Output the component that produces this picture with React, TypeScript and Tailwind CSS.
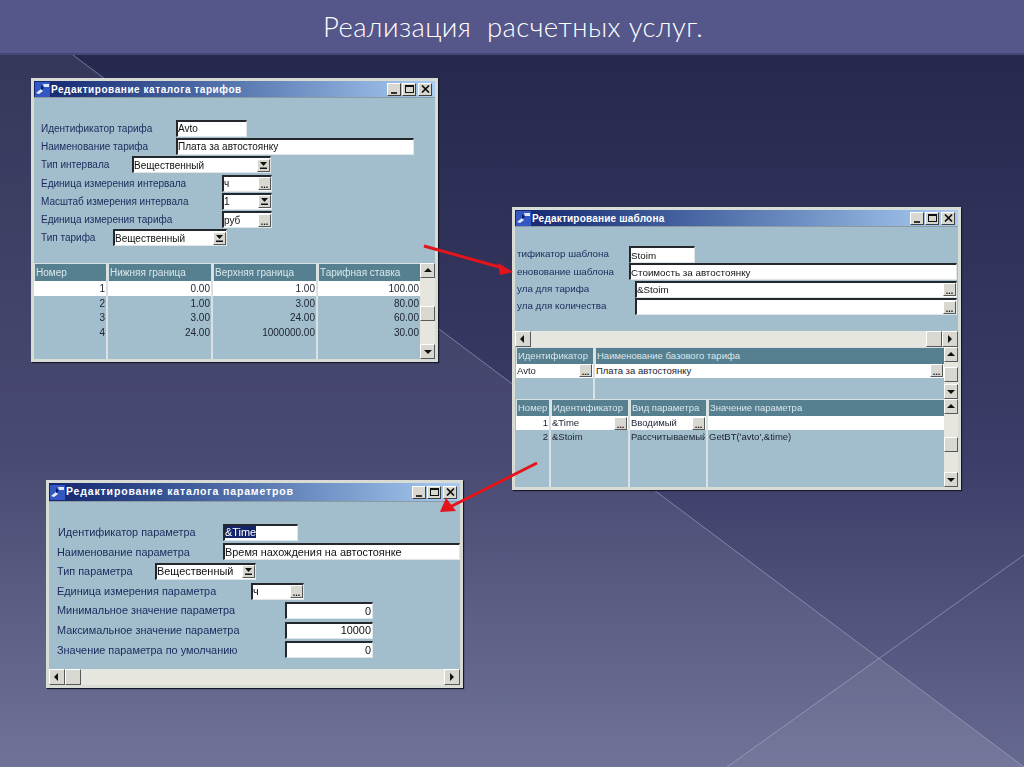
import React from 'react';

const font = "font-['Liberation_Sans',Arial,sans-serif]";

// small window-chrome glyphs
const Arrow = ({ dir }: { dir: 'up' | 'down' | 'left' | 'right' }) => {
    const points = { up: '1,6 9,6 5,2', down: '1,3 9,3 5,7', left: '6,1 6,9 2,5', right: '3,1 3,9 7,5' };
    return (
        <svg width="10" height="10" viewBox="0 0 10 10">
            <polygon points={points[dir]} fill="#111" />
        </svg>
    );
};

const ScrollButton = ({ dir, className = 'w-full h-[15px]' }: { dir: 'up' | 'down' | 'left' | 'right'; className?: string }) => (
    <div className={`${className} shrink-0 flex items-center justify-center bg-[#d8d8d0] border border-t-white border-l-white border-b-[#55595a] border-r-[#55595a]`}>
        <Arrow dir={dir} />
    </div>
);

const VScroll = ({ thumbTop, width }: { thumbTop: string; width: string }) => (
    <div className={`${width} shrink-0 h-full flex flex-col bg-[#e6e6df]`}>
        <ScrollButton dir="up" />
        <div className="flex-1">
            <div className={`${thumbTop} h-[15px] w-full bg-[#d8d8d0] border border-t-white border-l-white border-b-[#55595a] border-r-[#55595a]`} />
        </div>
        <ScrollButton dir="down" />
    </div>
);

const HScroll = ({ thumb }: { thumb: 'left' | 'right' }) => (
    <div className="h-[16px] shrink-0 flex bg-[#e6e6df]">
        <ScrollButton dir="left" className="w-[16px] h-[16px]" />
        <div className={`flex-1 flex ${thumb === 'right' ? 'justify-end' : 'justify-start'}`}>
            <div className="w-[16px] h-[16px] bg-[#d8d8d0] border border-t-white border-l-white border-b-[#55595a] border-r-[#55595a]" />
        </div>
        <ScrollButton dir="right" className="w-[16px] h-[16px]" />
    </div>
);

const TitleButton = ({ children }: { children: React.ReactNode }) => (
    <div className="w-[14px] h-[13px] flex items-center justify-center bg-[#d8d8d0] border border-t-white border-l-white border-b-[#404040] border-r-[#404040]">
        {children}
    </div>
);

const Win = ({ title, className, titleSize, titleH = 'h-[17px]', children }: { title: string; className: string; titleSize: string; titleH?: string; children: React.ReactNode }) => (
    <div className={`absolute flex flex-col border-[3px] border-[#d9dbd5] bg-[#a2bdcb] shadow-[1px_1px_1px_#15172c] blur-[0.3px] ${font} ${className}`}>
        <div className={`${titleH} shrink-0 flex items-center bg-linear-to-r from-[#14246e] to-[#a9cdf2] border-b border-[#8d9aa0]`}>
            <svg width="15" height="15" viewBox="0 0 15 15" className="shrink-0 ml-[1px]">
                <rect width="15" height="15" fill="#3358c4" />
                <path d="M1 11 L6 7 L8 9 L4 12 Z" fill="#e8eefc" />
                <path d="M8 2 L14 2 L14 5 L9 5 Z" fill="#dfe8fb" />
                <path d="M6 3 L9 6 L6 8 Z" fill="#0d1a66" />
            </svg>
            <span className={`ml-[1px] font-bold text-white whitespace-nowrap ${titleSize}`}>{title}</span>
            <div className="ml-auto mr-[3px] flex">
                <TitleButton>
                    <div className="w-[6px] h-[2px] mt-[7px] bg-[#333]" />
                </TitleButton>
                <div className="ml-[1px]">
                    <TitleButton>
                        <div className="w-[9px] h-[8px] border border-t-2 border-[#111]" />
                    </TitleButton>
                </div>
                <div className="ml-[2px]">
                    <TitleButton>
                        <svg width="9" height="8" viewBox="0 0 9 8">
                            <path d="M1 0.5 L8 7.5 M8 0.5 L1 7.5" stroke="#111" strokeWidth="1.7" />
                        </svg>
                    </TitleButton>
                </div>
            </div>
        </div>
        {children}
    </div>
);

const FieldButton = ({ kind }: { kind: 'select' | 'dots' }) => (
    <div className="w-[13px] h-[13px] shrink-0 flex flex-col items-center justify-center bg-[#d8d8d0] border border-t-white border-l-white border-b-[#55595a] border-r-[#55595a]">
        {kind === 'dots' ? (
            <span className="text-[9px] leading-[6px] mt-[3px] font-bold text-[#111]">...</span>
        ) : (
            <svg width="9" height="9" viewBox="0 0 9 9">
                <polygon points="1,1 8,1 4.5,5" fill="#111" />
                <rect x="1" y="6.5" width="7" height="1.5" fill="#111" />
            </svg>
        )}
    </div>
);

const Field = ({ value, className, button, right, selected }: { value?: string; className: string; button?: 'select' | 'dots'; right?: boolean; selected?: boolean }) => (
    <div className={`h-[17px] shrink-0 flex items-center bg-white border-t-2 border-l-2 border-t-[#24282c] border-l-[#24282c] border-b border-r border-b-[#dfe6e8] border-r-[#dfe6e8] text-[#111] ${className}`}>
        <span className={`flex-1 whitespace-nowrap overflow-hidden leading-[13px] ${right ? 'text-right pr-[1px]' : ''}`}>
            {selected ? <span className="bg-[#13246b] text-white">{value}</span> : value}
        </span>
        {button && <FieldButton kind={button} />}
    </div>
);

const Row = ({ label, labelW, className = 'h-[18.3px]', children }: { label: string; labelW: string; className?: string; children: React.ReactNode }) => (
    <div className={`flex items-center ${className}`}>
        <span className={`${labelW} shrink-0 whitespace-nowrap text-[#1a2a5c]`}>{label}</span>
        {children}
    </div>
);

type Col = { title: string; w: string; cells: string[]; right?: boolean; dots?: boolean; last?: boolean };

const Grid = ({ cols, className, headH = 'h-[17px]', rowH, thumbTop, scrollW }: { cols: Col[]; className: string; headH?: string; rowH: string; thumbTop: string; scrollW: string }) => (
    <div className={`flex shrink-0 ${className}`}>
        {cols.map((col, i) => (
            <div key={i} className={`${col.w} flex flex-col h-full ${col.last ? '' : 'border-r-2 border-[#d9e1e3]'}`}>
                <div className={`${headH} shrink-0 flex items-center px-[1px] whitespace-nowrap overflow-hidden bg-[#56808f] text-[#dbe7ec] border-l border-t border-[#d9e1e3]`}>{col.title}</div>
                {col.cells.map((cell, j) => (
                    <div key={j} className={`${rowH} shrink-0 flex items-center whitespace-nowrap overflow-hidden px-[1px] text-[#1b2230] ${j === 0 ? 'bg-white' : ''}`}>
                        <span className="flex-1 overflow-hidden">
                            <span className={`block ${col.right ? 'text-right' : ''}`}>{cell}</span>
                        </span>
                        {j === 0 && col.dots && <FieldButton kind="dots" />}
                    </div>
                ))}
            </div>
        ))}
        <VScroll thumbTop={thumbTop} width={scrollW} />
    </div>
);

const tariffCols: Col[] = [
    { title: 'Номер', w: 'w-[74px]', right: true, cells: ['1', '2', '3', '4'] },
    { title: 'Нижняя граница', w: 'w-[105px]', right: true, cells: ['0.00', '1.00', '3.00', '24.00'] },
    { title: 'Верхняя граница', w: 'w-[105px]', right: true, cells: ['1.00', '3.00', '24.00', '1000000.00'] },
    { title: 'Тарифная ставка', w: 'w-[102px]', right: true, last: true, cells: ['100.00', '80.00', '60.00', '30.00'] },
];

const baseCols: Col[] = [
    { title: 'Идентификатор', w: 'w-[79px]', dots: true, cells: ['Avto'] },
    { title: 'Наименование базового тарифа', w: 'w-[349px]', dots: true, last: true, cells: ['Плата за автостоянку'] },
];

const paramCols: Col[] = [
    { title: 'Номер', w: 'w-[35px]', right: true, cells: ['1', '2'] },
    { title: 'Идентификатор', w: 'w-[79px]', dots: true, cells: ['&Time', '&Stoim'] },
    { title: 'Вид параметра', w: 'w-[78px]', dots: true, cells: ['Вводимый', 'Рассчитываемый'] },
    { title: 'Значение параметра', w: 'w-[236px]', last: true, cells: ['', "GetBT('avto',&time)"] },
];

export default function App() {
    return (
        <div className="relative w-[1024px] h-[767px] overflow-hidden flex flex-col bg-linear-to-b from-[#23264a] via-[#3c3d68] via-60% to-[#666990]">
            {/* background shapes */}
            <svg className="absolute inset-0" width="1024" height="767" viewBox="0 0 1024 767">
                <polygon points="0,0 0,767 1024,767 73,55" fill="#ffffff" fillOpacity="0.07" />
                <polygon points="879,658 727,767 1024,767" fill="#ffffff" fillOpacity="0.04" />
                <line x1="73" y1="55" x2="1024" y2="767" stroke="#aeb2cc" strokeOpacity="0.55" />
                <line x1="1024" y1="555" x2="727" y2="767" stroke="#aeb2cc" strokeOpacity="0.55" />
            </svg>

            <header className="relative h-[55px] shrink-0 flex items-center justify-center pl-[2px] pt-[1px] bg-[#55568a] border-b-2 border-[#45467a]">
                <h1 className="font-['Lato',sans-serif] font-light text-[27.5px] tracking-[0.4px] whitespace-pre text-white">Реализация  расчетных услуг.</h1>
            </header>

            <Win title="Редактирование каталога тарифов" titleSize="text-[10px] tracking-[0.55px]" className="left-[31px] top-[78px] w-[407px] h-[284px] text-[10px]">
                <div className="flex-1 pt-[21px] pl-[7px] min-h-0">
                    <Row label="Идентификатор тарифа" labelW="w-[135px]">
                        <Field value="Avto" className="w-[71px]" />
                    </Row>
                    <Row label="Наименование тарифа" labelW="w-[135px]">
                        <Field value="Плата за автостоянку" className="w-[238px]" />
                    </Row>
                    <Row label="Тип интервала" labelW="w-[91px]">
                        <Field value="Вещественный" className="w-[139px]" button="select" />
                    </Row>
                    <Row label="Единица измерения интервала" labelW="w-[181px]">
                        <Field value="ч" className="w-[50px]" button="dots" />
                    </Row>
                    <Row label="Масштаб измерения интервала" labelW="w-[181px]">
                        <Field value="1" className="w-[50px]" button="select" />
                    </Row>
                    <Row label="Единица измерения тарифа" labelW="w-[181px]">
                        <Field value="руб" className="w-[50px]" button="dots" />
                    </Row>
                    <Row label="Тип тарифа" labelW="w-[72px]">
                        <Field value="Вещественный" className="w-[114px]" button="select" />
                    </Row>
                </div>
                <Grid cols={tariffCols} className="h-[96px] text-[10px]" headH="h-[18px]" rowH="h-[14.7px]" thumbTop="mt-[28px]" scrollW="w-[15px]" />
            </Win>

            <Win title="Редактирование шаблона" titleSize="text-[10px] tracking-[0.2px]" className="left-[512px] top-[207px] w-[449px] h-[283px] text-[9.8px]">
                <div className="flex-1 pt-[19px] min-h-0 pl-[2px]">
                    <Row label="тификатор шаблона" labelW="w-[112px]" className="h-[17.3px]">
                        <Field value="Stoim" className="w-[66px]" />
                    </Row>
                    <Row label="еновование шаблона" labelW="w-[112px]" className="h-[17.3px]">
                        <Field value="Стоимость за автостоянку" className="w-[328px]" />
                    </Row>
                    <Row label="ула для тарифа" labelW="w-[118px]" className="h-[17.3px]">
                        <Field value="&Stoim" className="w-[322px]" button="dots" />
                    </Row>
                    <Row label="ула для количества" labelW="w-[118px]" className="h-[17.3px]">
                        <Field className="w-[322px]" button="dots" />
                    </Row>
                </div>
                <HScroll thumb="right" />
                <Grid cols={baseCols} className="h-[52px] pl-[1px] text-[9.5px]" rowH="h-[13.5px]" thumbTop="mt-[5px]" scrollW="w-[14px]" />
                <Grid cols={paramCols} className="h-[88px] pl-[1px] text-[9.5px]" rowH="h-[14px]" thumbTop="mt-[23px]" scrollW="w-[14px]" />
            </Win>

            <Win title="Редактирование каталога параметров" titleH="h-[19px]" titleSize="text-[10.5px] tracking-[0.85px]" className="left-[46px] top-[480px] w-[417px] h-[208px] text-[10.9px]">
                <div className="flex-1 pt-[20.5px] pl-[8px] min-h-0 overflow-hidden">
                    <Row label="Идентификатор параметра" labelW="w-[166px] pl-[1px]" className="h-[19.6px]">
                        <Field value="&Time" className="w-[75px]" selected />
                    </Row>
                    <Row label="Наименование параметра" labelW="w-[166px]" className="h-[19.6px]">
                        <Field value="Время нахождения на автостоянке" className="w-[237px]" />
                    </Row>
                    <Row label="Тип параметра" labelW="w-[98px]" className="h-[19.6px]">
                        <Field value="Вещественный" className="w-[101px]" button="select" />
                    </Row>
                    <Row label="Единица измерения параметра" labelW="w-[194px]" className="h-[19.6px]">
                        <Field value="ч" className="w-[53px]" button="dots" />
                    </Row>
                    <Row label="Минимальное значение параметра" labelW="w-[228px]" className="h-[19.6px]">
                        <Field value="0" className="w-[88px]" right />
                    </Row>
                    <Row label="Максимальное значение параметра" labelW="w-[228px]" className="h-[19.6px]">
                        <Field value="10000" className="w-[88px]" right />
                    </Row>
                    <Row label="Значение параметра по умолчанию" labelW="w-[228px]" className="h-[19.6px]">
                        <Field value="0" className="w-[88px]" right />
                    </Row>
                </div>
                <HScroll thumb="left" />
            </Win>

            {/* red arrows between the windows */}
            <svg className="absolute inset-0 pointer-events-none" width="1024" height="767" viewBox="0 0 1024 767">
                <line x1="424" y1="246" x2="503" y2="268" stroke="#e3141c" strokeWidth="3" />
                <polygon points="513,272 500,275 498,263" fill="#e3141c" />
                <line x1="537" y1="463" x2="450" y2="507" stroke="#e3141c" strokeWidth="3" />
                <polygon points="440,512 446,498 456,511" fill="#e3141c" />
            </svg>
        </div>
    );
}
